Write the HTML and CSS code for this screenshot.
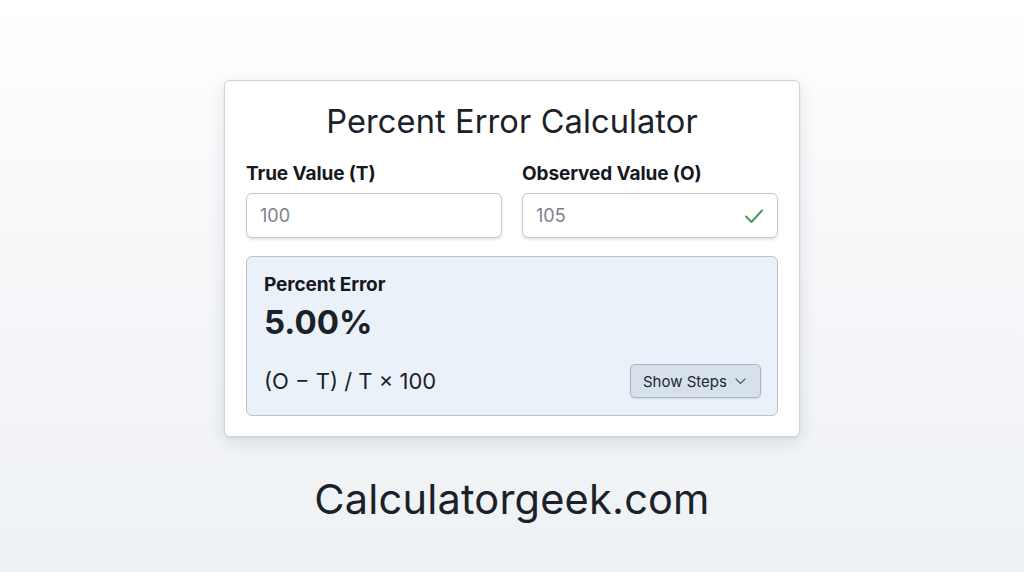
FILE: index.html
```html
<!DOCTYPE html>
<html lang="en">
<head>
<meta charset="utf-8">
<title>Percent Error Calculator</title>
<link rel="stylesheet" href="styles.css">
</head>
<body>
<main class="page">
  <section class="card">
    <h1 class="title">Percent Error Calculator</h1>
    <div class="fields">
      <div class="field">
        <label class="label">True Value (T)</label>
        <div class="input"><span class="value">100</span></div>
      </div>
      <div class="field">
        <label class="label">Observed Value (O)</label>
        <div class="input"><span class="value">105</span>
          <svg class="check" width="20" height="16" viewBox="0 0 20 16"><path d="M2 8.5 L7.5 14 L18 2.5" fill="none" stroke="#4a9a5c" stroke-width="2" stroke-linecap="round" stroke-linejoin="round"/></svg>
        </div>
      </div>
    </div>
    <div class="result">
      <div class="result-label">Percent Error</div>
      <div class="result-value">5.00%</div>
      <div class="result-foot">
        <span class="formula">(O − T) / T × 100</span>
        <button class="steps">Show Steps
          <svg width="11" height="7" viewBox="0 0 11 7"><path d="M1 1 L5.5 5.5 L10 1" fill="none" stroke="#5a6673" stroke-width="1.3" stroke-linecap="round" stroke-linejoin="round"/></svg>
        </button>
      </div>
    </div>
  </section>
  <div class="brand">Calculatorgeek.com</div>
</main>
</body>
</html>
```
FILE: styles.css
```css
* { box-sizing: border-box; }
html, body { margin: 0; padding: 0; }
body {
  width: 1024px;
  height: 572px;
  overflow: hidden;
  background: linear-gradient(180deg, #ffffff 0%, #f7f8fa 40%, #eef1f5 100%);
  font-family: Inter, "Noto Sans", sans-serif;
  color: #1b2129;
}
.page {
  display: flex;
  flex-direction: column;
  align-items: center;
  padding-top: 80px;
}
.card {
  width: 576px;
  height: 357px;
  background: #fff;
  border: 1px solid #cdd2d8;
  border-radius: 6px;
  box-shadow: 0 6px 18px rgba(40, 50, 70, 0.12), 0 1px 3px rgba(40,50,70,0.08);
  padding: 20px 21px 0 21px;
}
.title {
  margin: 0;
  text-align: center;
  font-weight: 400;
  font-size: 32.6px;
  line-height: 40px;
  letter-spacing: 0.1px;
  color: #1b2129;
}
.fields {
  display: grid;
  grid-template-columns: 1fr 1fr;
  column-gap: 20px;
  margin-top: 20px;
}
.field { display: flex; flex-direction: column; }
.label {
  font-weight: 650;
  font-size: 19px;
  line-height: 26px;
  letter-spacing: -0.1px;
  color: #15191f;
}
.input {
  margin-top: 6px;
  height: 45px;
  border: 1px solid #c3c8cf;
  border-radius: 6px;
  background: #fff;
  box-shadow: 0 2px 3px rgba(40,50,70,0.12);
  display: flex;
  align-items: center;
  justify-content: space-between;
  padding: 0 13px 0 13px;
}
.value { font-size: 18px; color: #7b828b; }
.result {
  margin-top: 18px;
  height: 160px;
  background: #ebf1f8;
  border: 1px solid #b9c5d2;
  border-radius: 6px;
  padding: 15px 17px 0 17px;
}
.result-label {
  font-weight: 650;
  font-size: 19px;
  line-height: 26px;
  letter-spacing: -0.1px;
  color: #15191f;
}
.result-value {
  font-weight: 700;
  font-size: 33px;
  line-height: 44px;
  color: #1b2129;
  margin-top: 2px;
}
.result-foot {
  display: flex;
  justify-content: space-between;
  align-items: center;
  margin-top: 20px;
}
.formula { font-size: 22px; color: #1b2129; }
.steps {
  display: flex;
  align-items: center;
  gap: 8px;
  height: 34px;
  width: 131px;
  padding: 0 12px;
  border: 1px solid #a7b5c3;
  border-radius: 5px;
  background: #d7e1eb;
  box-shadow: 0 1px 2px rgba(40,50,70,0.12);
  font-family: Inter, "Noto Sans", sans-serif;
  font-size: 15px;
  color: #1f2730;
  margin-right: -1px;
}
.brand {
  margin-top: 38px;
  font-size: 41.5px;
  line-height: 48px;
  color: #1b2129;
  letter-spacing: 0.2px;
}
```
